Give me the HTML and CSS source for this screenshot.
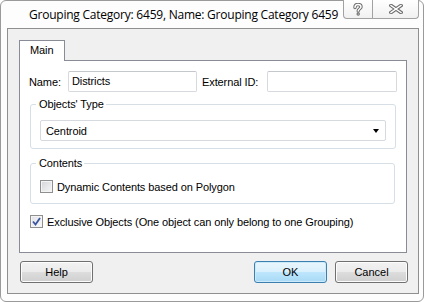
FILE: index.html
```html
<!DOCTYPE html>
<html lang="en">
<head>
    <meta charset="UTF-8">
    <title>Grouping Category</title>
    <link rel="stylesheet" href="styles.css">
</head>
<body>

    <div class="window">
        <div class="titlebar">
            <span class="title">Grouping Category: 6459, Name: Grouping Category 6459</span>
            <div class="caption-btns">
                <div class="cap-btn cap-help">
                    <svg width="12" height="13" viewBox="0 0 12 13">
                        <path d="M3 4.5 C3 2 4.5 1.5 6 1.5 C7.8 1.5 9 2.4 9 4 C9 5.6 6.2 6 6.2 8" fill="none" stroke="#6d6d6d" stroke-width="3.4" stroke-linecap="round"/>
                        <path d="M3 4.5 C3 2 4.5 1.5 6 1.5 C7.8 1.5 9 2.4 9 4 C9 5.6 6.2 6 6.2 8" fill="none" stroke="#fff" stroke-width="1.4" stroke-linecap="round"/>
                        <circle cx="6.2" cy="11" r="1.7" fill="#6d6d6d"/>
                        <circle cx="6.2" cy="11" r="0.6" fill="#fff"/>
                    </svg>
                </div>
                <div class="cap-btn cap-close">
                    <svg width="14" height="10" viewBox="0 0 14 10">
                        <path d="M2 1.5 L12 8.5 M12 1.5 L2 8.5" stroke="#6d6d6d" stroke-width="3.6" stroke-linecap="square"/>
                        <path d="M2 1.5 L12 8.5 M12 1.5 L2 8.5" stroke="#fff" stroke-width="1.4" stroke-linecap="square"/>
                    </svg>
                </div>
            </div>
        </div>

        <div class="client">
            <div class="tabs">
                <div class="tab active">Main</div>
            </div>
            <div class="tab-panel">
                <div class="field-row">
                    <label class="lbl lbl-name">Name:</label>
                    <div class="textbox tb-name">Districts</div>
                    <label class="lbl lbl-ext">External ID:</label>
                    <div class="textbox tb-ext"></div>
                </div>

                <fieldset class="group group-type">
                    <legend>Objects' Type</legend>
                    <div class="combo">
                        <span>Centroid</span>
                        <span class="combo-arrow"></span>
                    </div>
                </fieldset>

                <fieldset class="group group-contents">
                    <legend>Contents</legend>
                    <div class="check-row">
                        <span class="checkbox"></span>
                        <span>Dynamic Contents based on Polygon</span>
                    </div>
                </fieldset>

                <div class="check-row exclusive">
                    <span class="checkbox checked">
                        <svg width="9" height="9" viewBox="0 0 9 9">
                            <path d="M1 4.5 L3.5 7.5 L8 1" fill="none" stroke="#3b55a0" stroke-width="1.8"/>
                        </svg>
                    </span>
                    <span>Exclusive Objects (One object can only belong to one Grouping)</span>
                </div>
            </div>

            <div class="button-row">
                <button class="btn btn-help">Help</button>
                <button class="btn btn-ok">OK</button>
                <button class="btn btn-cancel">Cancel</button>
            </div>
        </div>
    </div>

</body>
</html>
```

FILE: styles.css
```css
* {
    margin: 0;
    padding: 0;
    box-sizing: border-box;
}

body {
    background: #fff;
    font-family: 'Liberation Sans', Arial, sans-serif;
    font-size: 11px;
    letter-spacing: -0.1px;
    color: #000;
}

.window {
    width: 424px;
    height: 302px;
    border: 1px solid #9a9a9a;
    border-radius: 6px;
    background: #fdfdfd;
    display: flex;
    flex-direction: column;
}

/* title bar */
.titlebar {
    height: 27px;
    display: flex;
    align-items: flex-start;
}

.title {
    font-family: 'Open Sans', sans-serif;
    font-size: 12px;
    letter-spacing: -0.23px;
    margin: 5px 0 0 28px;
    white-space: nowrap;
}

.caption-btns {
    display: flex;
    margin: -1px 4px 0 auto;
}

.cap-btn {
    height: 19px;
    display: flex;
    align-items: center;
    justify-content: center;
    border: 1px solid #a2a2a2;
    border-top: none;
    background: linear-gradient(#ffffff, #f1f1f1);
}

.cap-help {
    width: 30px;
    border-radius: 0 0 0 4px;
}

.cap-close {
    width: 46px;
    border-left: none;
    border-radius: 0 0 4px 0;
}

/* client area */
.client {
    height: 266px;
    margin: 0 4px 0 6px;
    border: 1px solid #8f8f8f;
    background: #f0f0f0;
    display: flex;
    flex-direction: column;
}

.tabs {
    display: flex;
    padding: 11px 11px 0;
}

.tab {
    height: 21px;
    width: 46px;
    padding: 3px 0 0 10px;
    border: 1px solid #898c95;
    border-bottom: none;
    background: #fff;
    margin-bottom: -1px;
    position: relative;
}

.tab-panel {
    height: 193px;
    margin: 0 11px;
    border: 1px solid #898c95;
    background: #fff;
    padding: 10px 0 0 9px;
}

.field-row {
    display: flex;
    align-items: center;
    height: 21px;
}

.lbl-name {
    width: 39px;
}

.lbl-ext {
    width: 65px;
    margin-left: 5px;
}

.textbox {
    height: 21px;
    border: 1px solid #d6d9de;
    border-top-color: #c4c7cc;
    border-radius: 2px;
    padding: 3px 0 0 3px;
}

.tb-name {
    width: 129px;
}

.tb-ext {
    width: 130px;
}

.group {
    width: 366px;
    margin-left: 1px;
    border: 1px solid #d5dfe5;
    border-radius: 3px;
    padding: 0 9px;
}

.group legend {
    margin-left: -4px;
    padding: 0 2px 0 3px;
}

.group-type {
    margin-top: 6px;
    padding-top: 10px;
    padding-bottom: 7px;
}

.combo {
    height: 21px;
    border: 1px solid #d6d9de;
    border-radius: 2px;
    display: flex;
    align-items: center;
    padding: 0 6px 0 5px;
}

.combo-arrow {
    margin-left: auto;
    width: 0;
    height: 0;
    border-left: 3.5px solid transparent;
    border-right: 3.5px solid transparent;
    border-top: 4px solid #000;
}

.group-contents {
    margin-top: 8px;
    padding-top: 11px;
    padding-bottom: 10px;
    width: 365px;
}

.check-row {
    display: flex;
    align-items: center;
    gap: 4px;
}

.checkbox {
    width: 13px;
    height: 13px;
    border: 1px solid #8e8f8f;
    background: linear-gradient(135deg, #d3d5d9, #f7f7f7);
    box-shadow: inset 0 0 0 1px #f4f4f4;
    display: flex;
    align-items: center;
    justify-content: center;
}

.checkbox.checked {
    background: linear-gradient(135deg, #e0e2e6, #fafafa);
}

.exclusive {
    margin: 11px 0 0 1px;
}

/* buttons */
.button-row {
    display: flex;
    padding: 8px 10px 0 12px;
}

.btn {
    width: 73px;
    height: 22px;
    font-family: 'Liberation Sans', Arial, sans-serif;
    font-size: 11px;
    color: #000;
    border: 1px solid #707070;
    border-radius: 3px;
    background: linear-gradient(#f2f2f2 0%, #ebebeb 50%, #dddddd 51%, #cfcfcf 100%);
    box-shadow: inset 0 0 0 1px #fcfcfc;
}

.btn-ok {
    margin-left: auto;
    border-color: #3c7fb1;
    background: linear-gradient(#eaf6fd 0%, #d9f0fc 50%, #bee6fd 51%, #a7d9f5 100%);
    box-shadow: inset 0 0 0 1px #cdeaf9;
}

.btn-cancel {
    margin-left: 8px;
}
```
